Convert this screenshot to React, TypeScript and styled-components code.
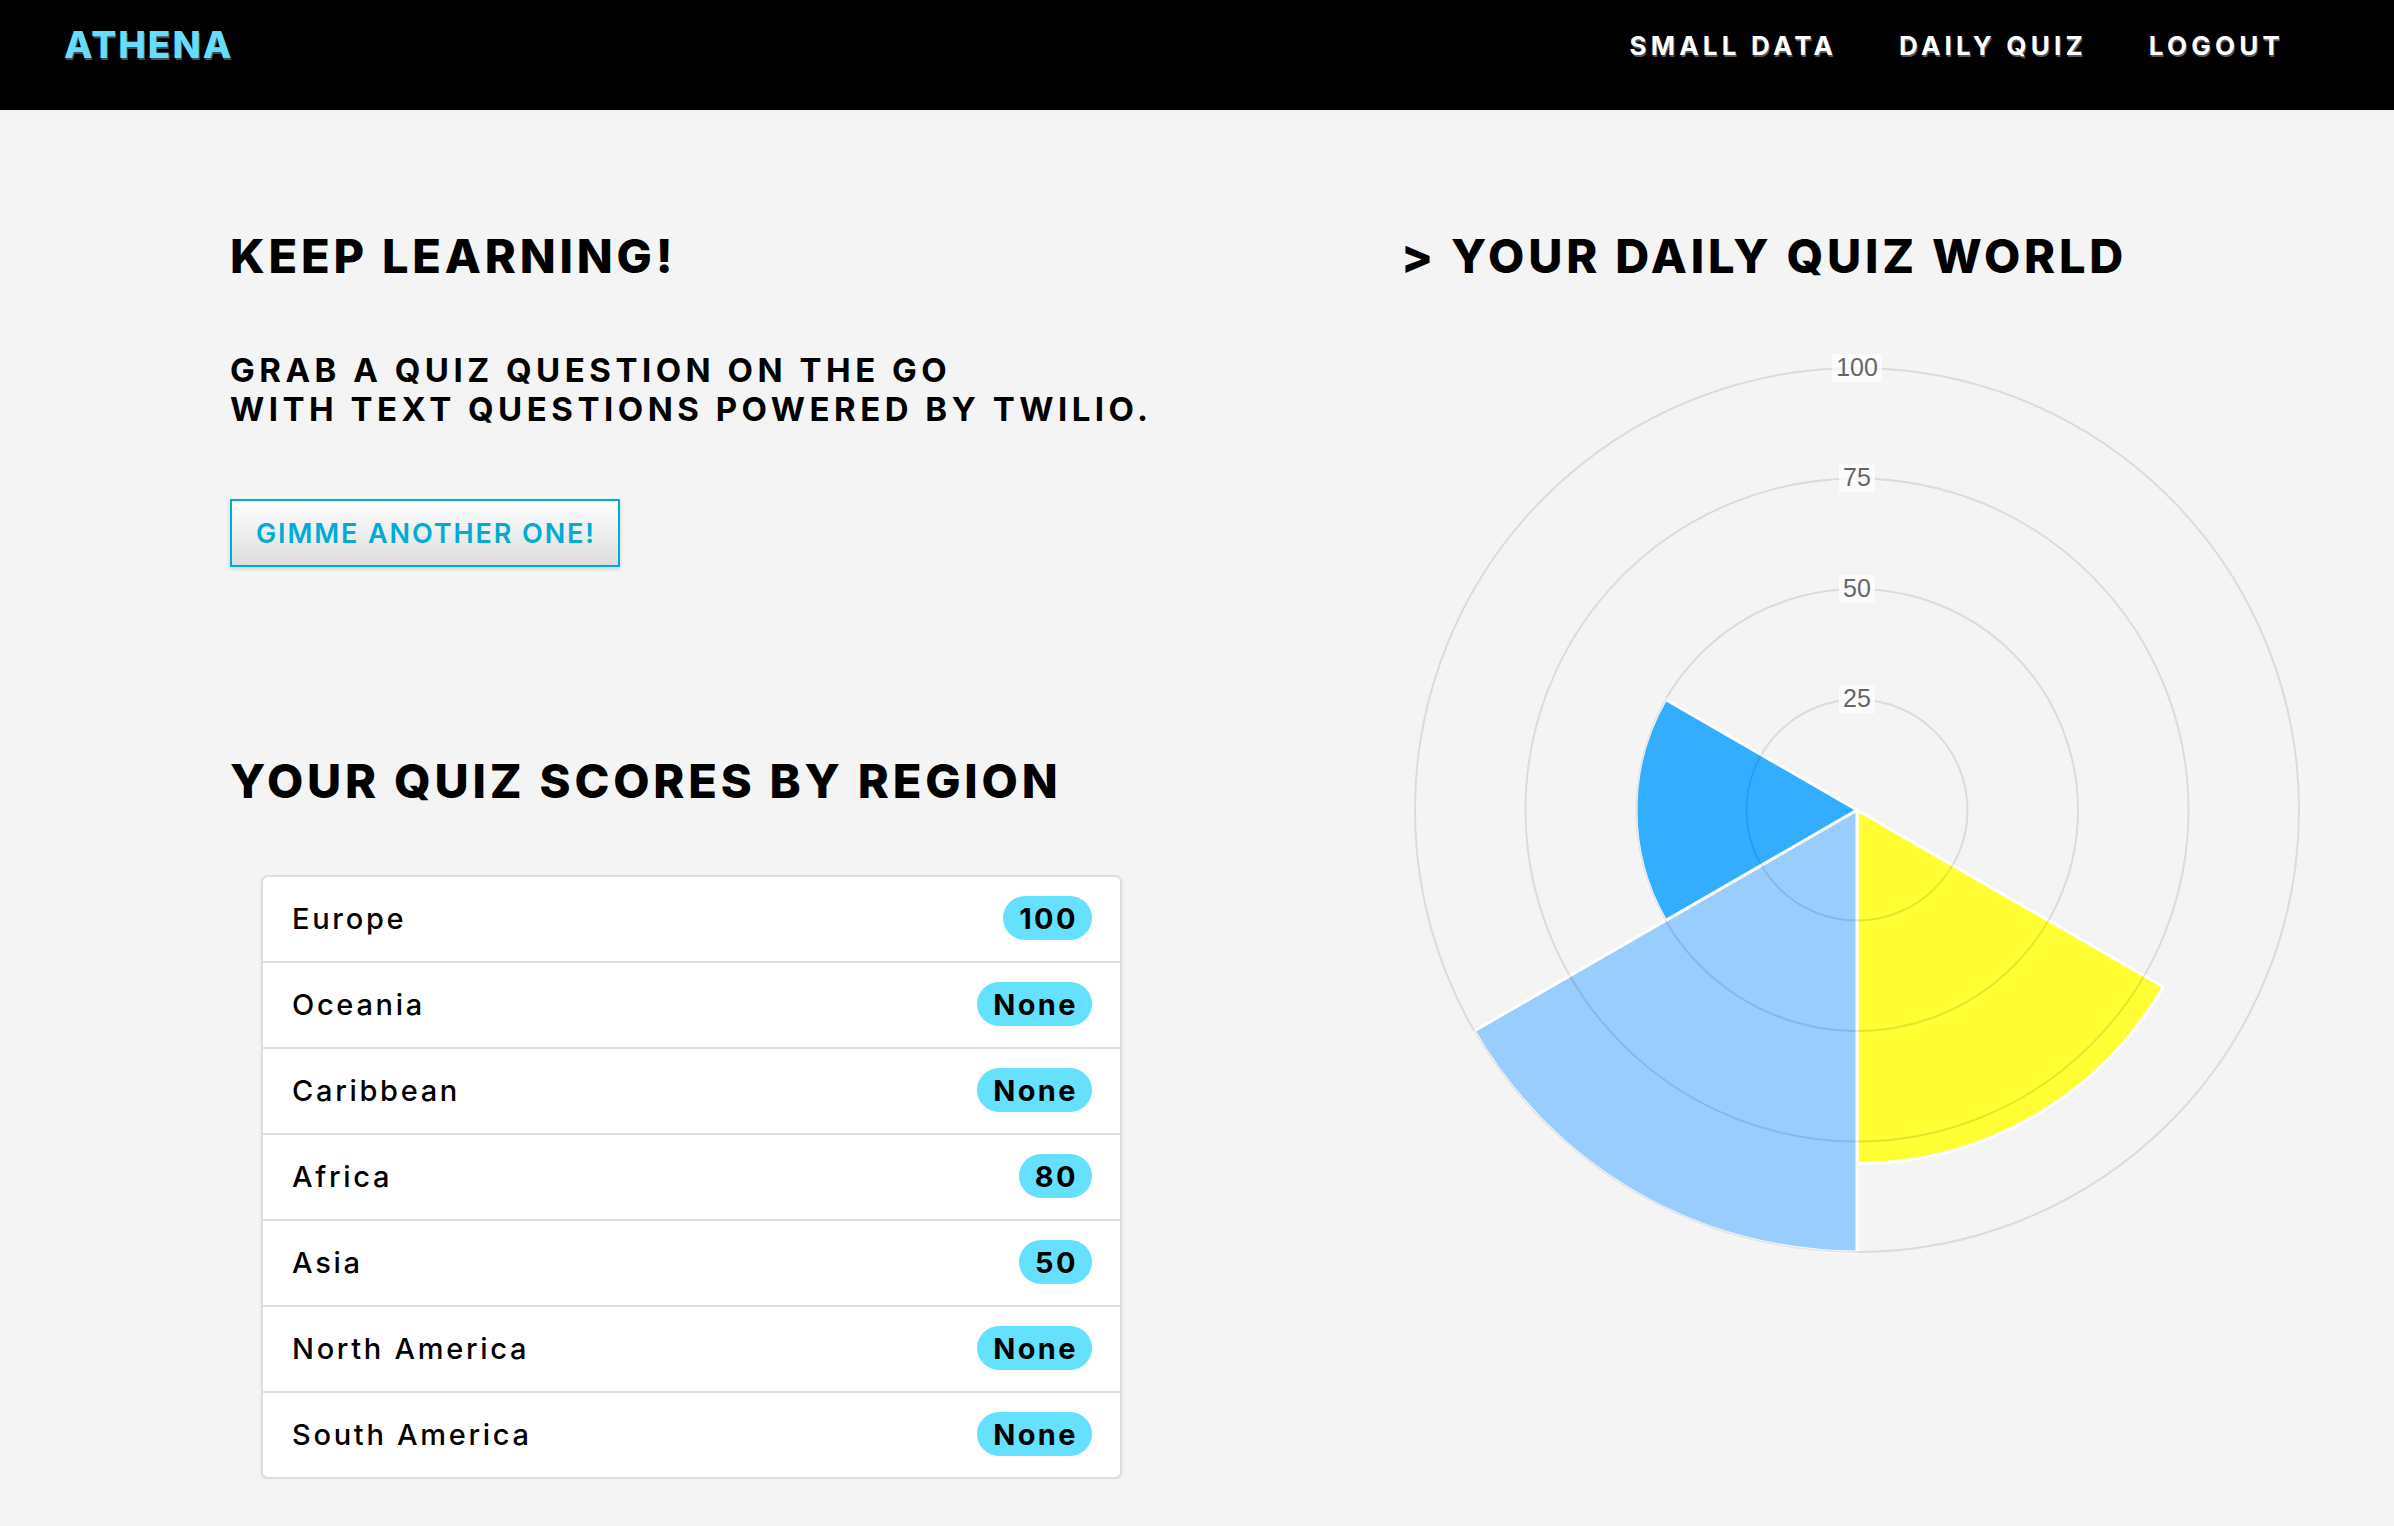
import React from "react";
import styled, { createGlobalStyle } from "styled-components";

const GlobalStyle = createGlobalStyle`
  html, body { margin: 0; padding: 0; background: #f4f4f4; }
  body { font-family: Inter, "Noto Sans", sans-serif; color: #000; }
  * { box-sizing: border-box; }
`;

const Nav = styled.nav`
  height: 110px;
  background: #000;
  display: flex;
  align-items: center;
  justify-content: space-between;
  padding: 0 110px 21px 64px;
`;

const Logo = styled.a`
  font-size: 37px;
  font-weight: 800;
  color: #66ddff;
  letter-spacing: 2px;
  line-height: 1;
  text-shadow: 1px 2px 0 #4a4a4a;
`;

const NavLinks = styled.div`
  display: flex;
  gap: 62px;
  padding-top: 3px;
`;

const NavLink = styled.a`
  font-size: 26px;
  font-weight: 700;
  color: #fff;
  letter-spacing: 4.2px;
  line-height: 1;
  text-shadow: 1px 2px 0 #555;
`;

const Main = styled.main`
  display: grid;
  grid-template-columns: 1171px 1fr;
  padding-left: 230px;
`;

const Column = styled.section`
  display: flex;
  flex-direction: column;
  align-items: flex-start;
`;

const Heading = styled.h1<{ $top: number }>`
  margin: ${(p) => p.$top}px 0 0;
  font-size: 47px;
  line-height: 47px;
  font-weight: 800;
  letter-spacing: 3.8px;
  text-transform: uppercase;
`;

const Subtitle = styled.p`
  margin: 72px 0 0;
  font-size: 33px;
  line-height: 39px;
  font-weight: 700;
  letter-spacing: 4.5px;
`;

const GimmeButton = styled.button`
  margin-top: 70px;
  height: 68px;
  padding: 0 22px 0 24px;
  border: 2px solid #00acd6;
  background: linear-gradient(#ffffff, #dddddd);
  box-shadow: 0 2px 4px rgba(0, 0, 0, 0.15);
  color: #00acd6;
  font-family: Inter, sans-serif;
  font-size: 27px;
  font-weight: 600;
  letter-spacing: 1.9px;
  cursor: pointer;
`;

const ScoreList = styled.ul`
  list-style: none;
  margin: 71px 0 0 31px;
  padding: 0;
  width: 861px;
  background: #fff;
  border: 2px solid #dedede;
  border-radius: 7px;
  box-shadow: 0 1px 3px rgba(0, 0, 0, 0.08);
  overflow: hidden;
`;

const ScoreRow = styled.li`
  height: 86px;
  display: flex;
  align-items: center;
  justify-content: space-between;
  padding: 0 28px 2px 29px;
  border-top: 2px solid #dedede;
  &:first-child {
    border-top: none;
    height: 84px;
  }
`;

const RegionName = styled.span`
  font-size: 29px;
  font-weight: 500;
  letter-spacing: 2.7px;
`;

const Badge = styled.span`
  height: 44px;
  padding: 0 14px 0 16px;
  border-radius: 22px;
  background: #66e0ff;
  display: inline-flex;
  align-items: center;
  font-size: 29px;
  font-weight: 700;
  letter-spacing: 2.4px;
`;

const ChartSvg = styled.svg`
  margin-top: 65px;
  display: block;
`;

const scores: { name: string; score: string }[] = [
  { name: "Europe", score: "100" },
  { name: "Oceania", score: "None" },
  { name: "Caribbean", score: "None" },
  { name: "Africa", score: "80" },
  { name: "Asia", score: "50" },
  { name: "North America", score: "None" },
  { name: "South America", score: "None" },
];

const W = 912;
const H = 920;
const CX = 456;
const CY = 466;
const R = 442;

const segments = [
  { value: 0, color: "#fff" },
  { value: 0, color: "#fff" },
  { value: 80, color: "#ffff33" },
  { value: 100, color: "#99ccff" },
  { value: 50, color: "#33adff" },
  { value: 0, color: "#fff" },
];

function wedge(i: number, value: number) {
  const r = (value / 100) * R;
  const a0 = ((-90 + 60 * i) * Math.PI) / 180;
  const a1 = ((-90 + 60 * (i + 1)) * Math.PI) / 180;
  const x0 = CX + r * Math.cos(a0);
  const y0 = CY + r * Math.sin(a0);
  const x1 = CX + r * Math.cos(a1);
  const y1 = CY + r * Math.sin(a1);
  return `M ${CX} ${CY} L ${x0} ${y0} A ${r} ${r} 0 0 1 ${x1} ${y1} Z`;
}

function PolarChart() {
  const ticks = [25, 50, 75, 100];
  return (
    <ChartSvg width={W} height={H} viewBox={`0 0 ${W} ${H}`}>
      {segments.map((s, i) =>
        s.value > 0 ? (
          <path key={i} d={wedge(i, s.value)} fill={s.color} stroke="#fff" strokeWidth={3} strokeLinejoin="round" />
        ) : null
      )}
      {ticks.map((t) => (
        <circle key={t} cx={CX} cy={CY} r={(t / 100) * R} fill="none" stroke="rgba(0,0,0,0.1)" strokeWidth={2} />
      ))}
      {ticks.map((t) => {
        const label = String(t);
        const w = label.length * 14 + 8;
        const y = CY - (t / 100) * R;
        return (
          <g key={`l${t}`}>
            <rect x={CX - w / 2} y={y - 14} width={w} height={28} fill="rgba(255,255,255,0.75)" />
            <text
              x={CX}
              y={y + 1}
              textAnchor="middle"
              dominantBaseline="middle"
              fontFamily="'Liberation Sans', Arial, sans-serif"
              fontSize={25}
              fill="#666"
            >
              {label}
            </text>
          </g>
        );
      })}
    </ChartSvg>
  );
}

export default function App() {
  return (
    <>
      <GlobalStyle />
      <Nav>
        <Logo>ATHENA</Logo>
        <NavLinks>
          <NavLink>SMALL DATA</NavLink>
          <NavLink>DAILY QUIZ</NavLink>
          <NavLink>LOGOUT</NavLink>
        </NavLinks>
      </Nav>
      <Main>
        <Column>
          <Heading $top={122}>Keep learning!</Heading>
          <Subtitle>
            GRAB A QUIZ QUESTION ON THE GO
            <br />
            WITH TEXT QUESTIONS POWERED BY TWILIO.
          </Subtitle>
          <GimmeButton>GIMME ANOTHER ONE!</GimmeButton>
          <Heading $top={190}>Your quiz scores by region</Heading>
          <ScoreList>
            {scores.map((s) => (
              <ScoreRow key={s.name}>
                <RegionName>{s.name}</RegionName>
                <Badge>{s.score}</Badge>
              </ScoreRow>
            ))}
          </ScoreList>
        </Column>
        <Column>
          <Heading $top={122}>&gt; Your daily quiz world</Heading>
          <PolarChart />
        </Column>
      </Main>
    </>
  );
}
